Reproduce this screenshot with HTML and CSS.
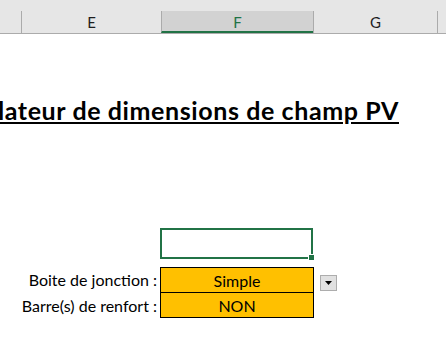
FILE: index.html
```html
<!DOCTYPE html>
<html>
<head>
<meta charset="utf-8">
<link rel="stylesheet" href="styles.css">
</head>
<body>
<div class="sheet">
  <div class="colhead">
    <div class="ch ch-lead"></div>
    <div class="ch ch-e">E</div>
    <div class="ch ch-f">F</div>
    <div class="ch ch-g">G</div>
    <div class="ch ch-rest"></div>
  </div>
  <div class="grid">
    <div class="title-row">
      <div class="title">Simulateur de dimensions de champ PV</div>
    </div>
    <div class="form">
      <div class="label"></div>
      <div class="cell sel"><span class="handle"></span></div>
      <div class="aside"></div>

      <div class="label">Boite de jonction :</div>
      <div class="cell val val-top">Simple</div>
      <div class="aside"><span class="dd"><svg width="7" height="4" viewBox="0 0 7 4"><path d="M0 0h7L3.5 4z" fill="#000"/></svg></span></div>

      <div class="label">Barre(s) de renfort :</div>
      <div class="cell val">NON</div>
      <div class="aside"></div>
    </div>
  </div>
</div>
</body>
</html>
```
FILE: styles.css
```css
html, body {
  margin: 0;
  padding: 0;
}
body {
  width: 446px;
  height: 339px;
  overflow: hidden;
  background: #fff;
  font-family: Lato, "Open Sans", sans-serif;
  color: #000;
}
.sheet {
  display: flex;
  flex-direction: column;
}
.colhead {
  display: flex;
  align-items: flex-end;
  height: 33px;
  background: #e6e6e6;
  border-bottom: 1px solid #ababab;
}
.ch {
  height: 22px;
  box-sizing: border-box;
  display: flex;
  align-items: center;
  justify-content: center;
  font-size: 15px;
  color: #1e1e1e;
  border-left: 1px solid #ababab;
}
.ch-lead {
  width: 21px;
  border-left: none;
}
.ch-e { width: 140px; }
.ch-f {
  width: 152px;
  background: #d2d2d2;
  color: #217346;
  border-bottom: 2px solid #217346;
  padding-top: 2px;
}
.ch-g { width: 124px; }
.ch-rest { flex: 1; }

.grid {
  display: flex;
  flex-direction: column;
}
.title-row {
  margin-top: 62px;
  width: 399px;
  overflow: hidden;
  display: flex;
  justify-content: flex-end;
}
.title {
  white-space: nowrap;
  font-size: 25px;
  letter-spacing: 0.6px;
  font-weight: bold;
  text-decoration: underline;
  line-height: 29px;
  flex-shrink: 0;
}
.form {
  margin-top: 103px;
  display: grid;
  grid-template-columns: 161px 152px 1fr;
  grid-template-rows: 31px 8px 25px 26px;
}
.form > .label:first-child { grid-row: 1; }
.form > .sel { grid-row: 1; grid-column: 2; }
.form > .aside:nth-child(3) { grid-row: 1; grid-column: 3; }
.form > :nth-child(4) { grid-row: 3; grid-column: 1; }
.form > :nth-child(5) { grid-row: 3; grid-column: 2; }
.form > :nth-child(6) { grid-row: 3; grid-column: 3; }
.form > :nth-child(7) { grid-row: 4; grid-column: 1; }
.form > :nth-child(8) { grid-row: 4; grid-column: 2; }
.form > :nth-child(9) { grid-row: 4; grid-column: 3; }

.label {
  font-size: 16px;
  text-align: right;
  padding-right: 4px;
  display: flex;
  align-items: center;
  justify-content: flex-end;
}
.cell {
  box-sizing: border-box;
}
.sel {
  position: relative;
  border: 2px solid #217346;
  margin-left: -1px;
}
.handle {
  position: absolute;
  right: -4px;
  bottom: -4px;
  width: 5px;
  height: 5px;
  background: #217346;
  border: 1px solid #fff;
}
.val {
  background: #ffc000;
  border: 1px solid #000;
  font-size: 16px;
  display: flex;
  align-items: center;
  justify-content: center;
  margin-left: -1px;
  margin-right: -1px;
}
.val-top {
  border-bottom: none;
}
.aside {
  display: flex;
  align-items: flex-end;
  padding-left: 7px;
}
.dd {
  width: 17px;
  height: 16px;
  box-sizing: border-box;
  background: #e1e1e1;
  border: 1px solid #adadad;
  display: flex;
  align-items: center;
  justify-content: center;
  margin-bottom: 1px;
}
```
